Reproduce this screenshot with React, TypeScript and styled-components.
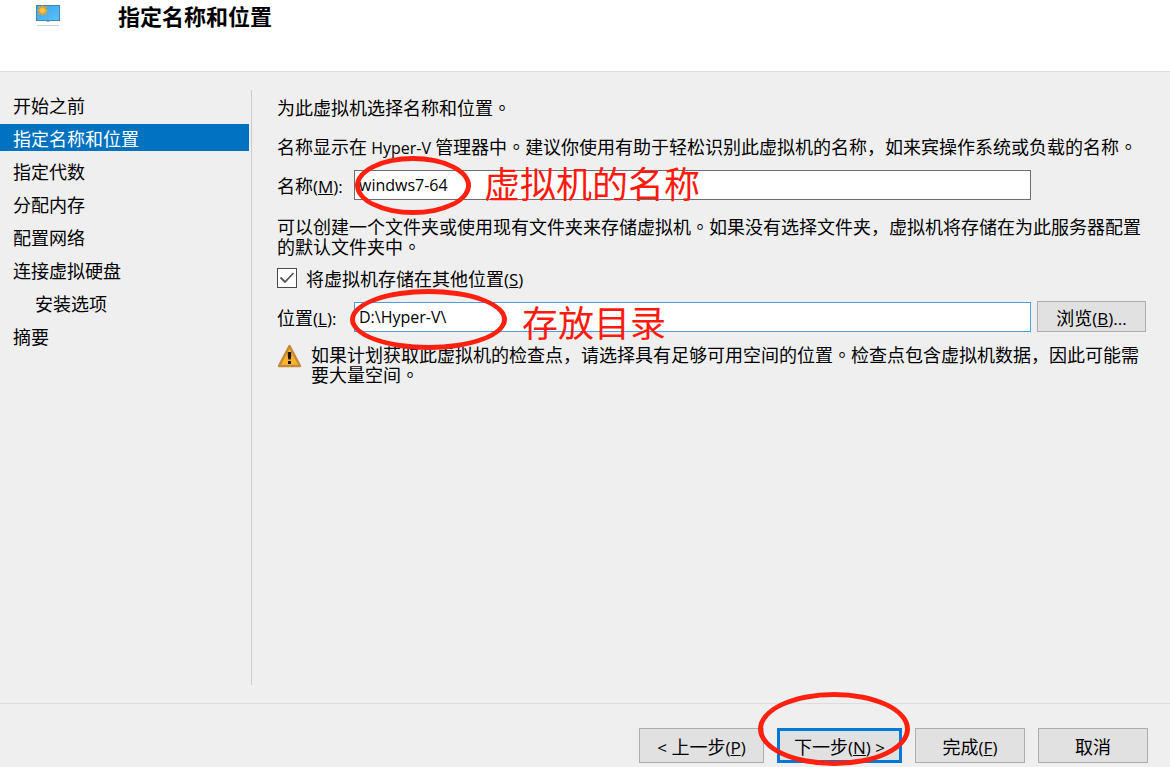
import React from "react";
import styled, { createGlobalStyle, css } from "styled-components";

const GlobalStyle = createGlobalStyle`
  *, *::before, *::after { box-sizing: border-box; }
  body {
    margin: 0;
    background: #efefef;
    color: #000;
    font-family: "Noto Sans CJK SC", "Open Sans", sans-serif;
    font-size: 18px;
    line-height: 20px;
  }
`;

const Wizard = styled.div`
  min-height: 100vh;
  display: flex;
  flex-direction: column;
`;

const Header = styled.header`
  display: flex;
  align-items: flex-start;
  gap: 56px;
  min-height: 72px;
  padding: 3px 36px;
  background: #fff;
  border-bottom: 1px solid #dcdcdc;
`;

const Title = styled.h1`
  margin: 0;
  font-size: 22px;
  line-height: 24px;
  font-weight: 700;
`;

const Body = styled.div`
  flex: 1;
  display: flex;
  padding: 18px 0;
`;

const Steps = styled.nav`
  flex: 0 0 251px;
  display: flex;
  flex-direction: column;
  gap: 6px;
  padding: 1px 2px 0 0;
`;

const Step = styled.a<{ $active?: boolean; $nested?: boolean }>`
  padding: 2px 0 0 ${(p) => (p.$nested ? 35 : 13)}px;
  line-height: 25px;
  text-decoration: none;
  color: ${(p) => (p.$active ? "#fff" : "#000")};
  background: ${(p) => (p.$active ? "#0072c0" : "transparent")};
`;

const Main = styled.main`
  flex: 1;
  min-width: 0;
  border-left: 1px solid #cbcbcb;
  padding: 7px 24px 0 25px;
`;

const Paragraph = styled.p<{ $gap?: number }>`
  margin: 0 0 ${(p) => p.$gap ?? 0}px;
`;

const Latin = styled.span<{ $large?: boolean }>`
  font-family: "Open Sans", sans-serif;
  font-size: ${(p) => (p.$large ? 17 : 16)}px;
  line-height: 0;
`;

const Stop = styled.span`
  font-family: "Noto Sans CJK TC", sans-serif;
  line-height: 0;
`;

const Field = styled.div<{ $gap: number }>`
  position: relative;
  display: grid;
  grid-template-columns: 77px 1fr 109px;
  align-items: center;
  margin-bottom: ${(p) => p.$gap}px;
`;

const FieldLabel = styled.label`
  white-space: nowrap;
`;

const TextInput = styled.input<{ $focused?: boolean }>`
  width: 100%;
  height: 30px;
  padding: 0 4px;
  border: 1px solid ${(p) => (p.$focused ? "#4a9fe3" : "#6e6e6e")};
  border-radius: 0;
  outline: none;
  background: #fff;
  color: #000;
  font-family: "Open Sans", sans-serif;
  font-size: 16px;
`;

const InputCell = styled.div`
  display: flex;
  padding-right: 6px;
`;

const Button = styled.button<{ $primary?: boolean; $size?: "wide" | "normal" | "browse" }>`
  height: ${(p) => (p.$size === "browse" ? 31 : 35)}px;
  width: ${(p) => (p.$size === "wide" ? 125 : p.$size === "browse" ? 109 : 110)}px;
  padding: 0;
  border: 1px solid #adadad;
  border-radius: 0;
  background: #e1e1e1;
  color: #000;
  font-family: inherit;
  font-size: 18px;
  line-height: 20px;
  white-space: nowrap;
  ${(p) =>
    p.$primary &&
    css`
      border: 3px solid #0078d7;
    `}
`;

const CheckRow = styled.label`
  display: flex;
  align-items: center;
  gap: 9px;
  margin-bottom: 13px;
`;

const CheckBox = styled.span`
  position: relative;
  width: 20px;
  height: 20px;

  input {
    appearance: none;
    display: block;
    width: 20px;
    height: 20px;
    margin: 0;
    border: 1px solid #4a4a4a;
    background: #fff;
  }

  svg {
    position: absolute;
    inset: 0;
    pointer-events: none;
    visibility: hidden;
  }

  input:checked + svg {
    visibility: visible;
  }
`;

const Warning = styled.div`
  display: grid;
  grid-template-columns: 25px 1fr;
  gap: 9px;
`;

const Footer = styled.footer`
  display: flex;
  justify-content: flex-end;
  gap: 13px;
  padding: 24px 22px 4px;
  border-top: 1px solid #dcdcdc;
`;

const ButtonSlot = styled.div`
  position: relative;
`;

const Ring = styled.span<{ $x: number; $y: number; $w: number; $h: number }>`
  position: absolute;
  left: ${(p) => p.$x}px;
  top: ${(p) => p.$y}px;
  width: ${(p) => p.$w}px;
  height: ${(p) => p.$h}px;
  border: 5px solid #ff2010;
  border-radius: 50%;
  pointer-events: none;
  z-index: 1;
`;

const Note = styled.span<{ $x: number; $y: number }>`
  position: absolute;
  left: ${(p) => p.$x}px;
  top: ${(p) => p.$y}px;
  font-size: 36px;
  line-height: 44px;
  color: #ff1a0e;
  white-space: nowrap;
  pointer-events: none;
`;

const Key = ({ k, after = "" }: { k: string; after?: string }) => (
  <Latin $large>
    (<u>{k}</u>){after}
  </Latin>
);

const MonitorIcon = () => (
  <svg width="26" height="24" viewBox="0 0 26 24" aria-hidden="true">
    <defs>
      <linearGradient id="screen" x1="0" y1="0" x2="1" y2="1">
        <stop offset="0" stopColor="#39a5ee" />
        <stop offset="1" stopColor="#5cc0fb" />
      </linearGradient>
    </defs>
    <rect x="0.5" y="2.5" width="23" height="15" fill="url(#screen)" stroke="#3b86bd" />
    <path d="M10 18h4l-2 1z" fill="#7d98a8" />
    <path d="M1 22.5h22" stroke="#c5ced5" strokeWidth="1" />
    <path
      d="M6.5 2l1.200 2.600 2.700-1.200-1.100 2.700L12 7.500l-2.700 1.200 1.100 2.700-2.700-1.100L6.500 13 5.300 10.300l-2.700 1.100 1.100-2.700L1 7.500l2.700-1.400-1.100-2.700 2.700 1.200z"
      fill="#f5b534"
      stroke="#d79b3c"
      strokeWidth="1"
    />
    <circle cx="6.5" cy="7.5" r="2" fill="#ffd04a" />
  </svg>
);

const WarningIcon = () => (
  <svg width="25" height="24" viewBox="0 0 25 24" aria-hidden="true">
    <path
      d="M12.500 2L23 22H2z"
      fill="#fbb32f"
      stroke="#c48a3a"
      strokeWidth="2.500"
      strokeLinejoin="round"
    />
    <path d="M10.800 8h3.400v4l-.5 3.500h-2.400l-.5-3.500z" fill="#1d1608" />
    <rect x="11" y="17" width="3" height="3" fill="#1d1608" />
  </svg>
);

const steps = [
  { label: "开始之前" },
  { label: "指定名称和位置", active: true },
  { label: "指定代数" },
  { label: "分配内存" },
  { label: "配置网络" },
  { label: "连接虚拟硬盘" },
  { label: "安装选项", nested: true },
  { label: "摘要" },
];

export default function App() {
  return (
    <Wizard>
      <GlobalStyle />
      <Header>
        <MonitorIcon />
        <Title>指定名称和位置</Title>
      </Header>
      <Body>
        <Steps>
          {steps.map((s) => (
            <Step
              key={s.label}
              href="#"
              $active={s.active}
              $nested={s.nested}
              aria-current={s.active ? "step" : undefined}
            >
              {s.label}
            </Step>
          ))}
        </Steps>
        <Main>
          <Paragraph $gap={19}>
            为此虚拟机选择名称和位置<Stop>。</Stop>
          </Paragraph>
          <Paragraph $gap={14}>
            名称显示在<Latin> Hyper-V </Latin>管理器中<Stop>。</Stop>
            建议你使用有助于轻松识别此虚拟机的名称，如来宾操作系统或负载的名称<Stop>。</Stop>
          </Paragraph>
          <Field $gap={16}>
            <FieldLabel htmlFor="vm-name">
              名称
              <Key k="M" after=":" />
            </FieldLabel>
            <InputCell>
              <TextInput id="vm-name" type="text" defaultValue="windws7-64" />
            </InputCell>
            <Ring $x={78} $y={-14} $w={116} $h={59} />
            <Note $x={207} $y={-10}>虚拟机的名称</Note>
          </Field>
          <Paragraph $gap={12}>
            可以创建一个文件夹或使用现有文件夹来存储虚拟机<Stop>。</Stop>
            如果没有选择文件夹，虚拟机将存储在为此服务器配置的默认文件夹中<Stop>。</Stop>
          </Paragraph>
          <CheckRow>
            <CheckBox>
              <input type="checkbox" defaultChecked />
              <svg width="20" height="20" viewBox="0 0 20 20" aria-hidden="true">
                <path d="M3.500 9.500l4.500 4.500 8.500-9" fill="none" stroke="#555" strokeWidth="1.800" />
              </svg>
            </CheckBox>
            <span>
              将虚拟机存储在其他位置
              <Key k="S" />
            </span>
          </CheckRow>
          <Field $gap={12}>
            <FieldLabel htmlFor="vm-path">
              位置
              <Key k="L" after=":" />
            </FieldLabel>
            <InputCell>
              <TextInput id="vm-path" type="text" defaultValue="D:\Hyper-V\" $focused />
            </InputCell>
            <Button type="button" $size="browse">
              浏览
              <Key k="B" after="..." />
            </Button>
            <Ring $x={73} $y={-12} $w={157} $h={61} />
            <Note $x={245} $y={-2}>存放目录</Note>
          </Field>
          <Warning>
            <WarningIcon />
            <Paragraph>
              如果计划获取此虚拟机的检查点，请选择具有足够可用空间的位置<Stop>。</Stop>
              检查点包含虚拟机数据，因此可能需要大量空间<Stop>。</Stop>
            </Paragraph>
          </Warning>
        </Main>
      </Body>
      <Footer>
        <Button type="button" $size="wide">
          <Latin $large>&lt; </Latin>上一步
          <Key k="P" />
        </Button>
        <ButtonSlot>
          <Button type="button" $size="wide" $primary>
            下一步
            <Key k="N" after=" >" />
          </Button>
          <Ring $x={-19} $y={-36} $w={152} $h={74} />
        </ButtonSlot>
        <Button type="button">
          完成
          <Key k="F" />
        </Button>
        <Button type="button">取消</Button>
      </Footer>
    </Wizard>
  );
}
